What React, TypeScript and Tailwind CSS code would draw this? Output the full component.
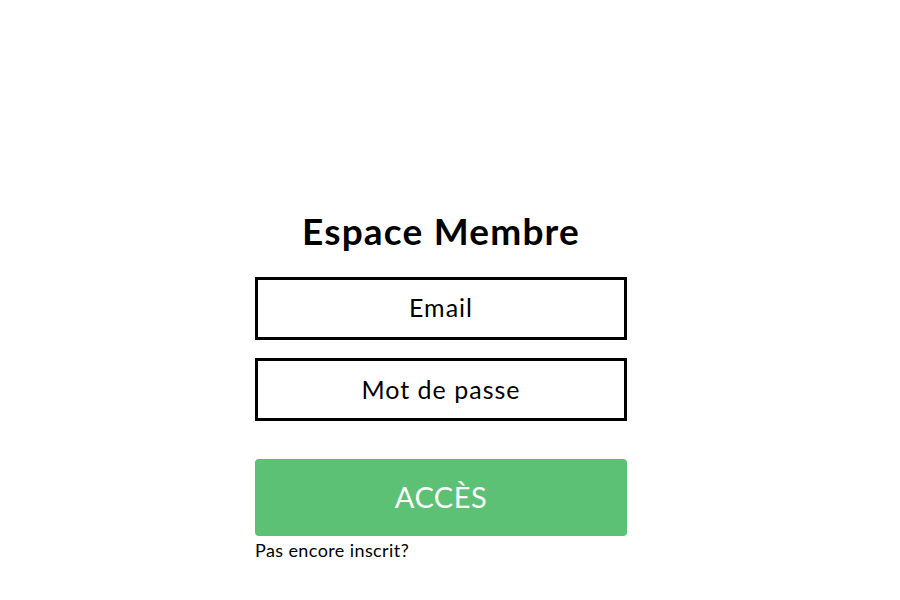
import React from 'react';

const font = { fontFamily: 'Lato, "Noto Sans", sans-serif' };

const App: React.FC = () => {
  return (
    <div className="min-h-screen w-full bg-white text-black" style={font}>
      <div className="flex flex-col items-center pr-[18px] pt-[208px]">
        <h1 className="text-[37px] font-bold leading-[46px] tracking-[1.2px]">Espace Membre</h1>
        <form className="mt-[23px] flex w-[372px] flex-col" onSubmit={(e) => e.preventDefault()}>
          <input
            type="email"
            placeholder="Email"
            className="h-[63px] w-full border-[3px] border-black bg-white pb-[3px] text-center text-[25px] tracking-[1px] placeholder:text-black focus:outline-none"
          />
          <input
            type="password"
            placeholder="Mot de passe"
            className="mt-[18px] h-[63px] w-full border-[3px] border-black bg-white pb-[2px] text-center text-[25px] tracking-[1px] placeholder:text-black focus:outline-none"
          />
          <button
            type="submit"
            className="mt-[38px] h-[77px] w-full rounded-[4px] bg-[#5cc174] pb-[2px] text-[29px] tracking-[0.5px] text-white"
          >
            ACCÈS
          </button>
          <a href="#" className="mt-[2px] text-[18px] leading-[24px] tracking-[0.4px] text-black">
            Pas encore inscrit?
          </a>
        </form>
      </div>
    </div>
  );
};

export default App;
